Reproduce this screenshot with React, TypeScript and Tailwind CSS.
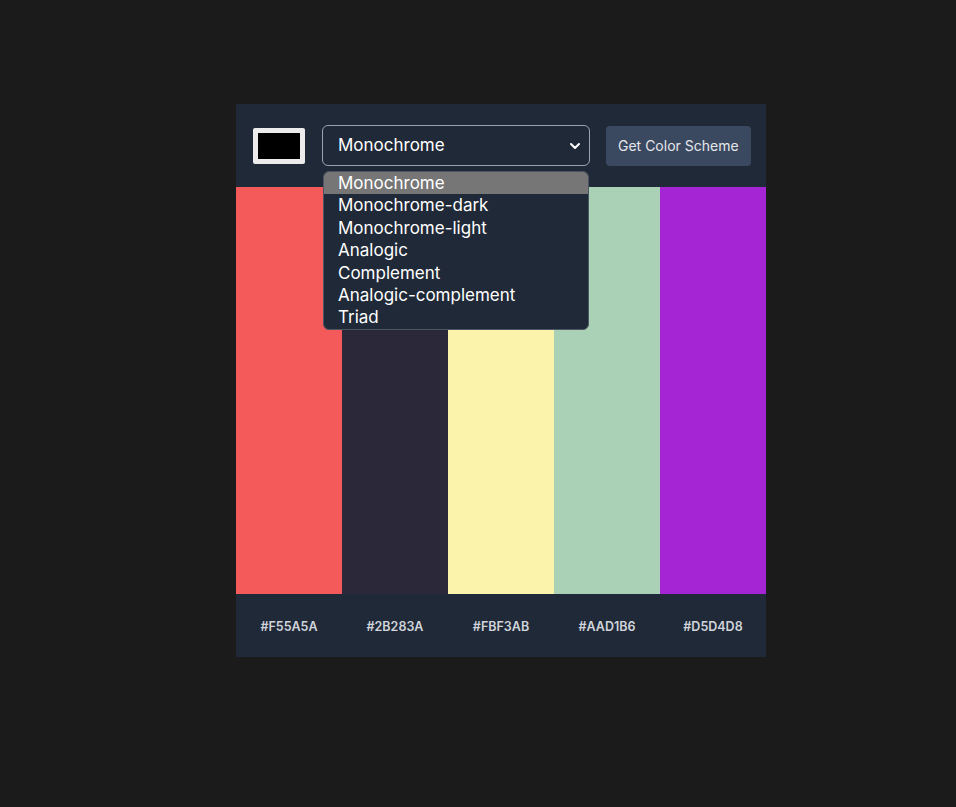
import { ChevronDown } from 'lucide-react';

const colors = [
  { hex: '#F55A5A', bg: 'bg-[#f55a5a]' },
  { hex: '#2B283A', bg: 'bg-[#2b283a]' },
  { hex: '#FBF3AB', bg: 'bg-[#fbf3ab]' },
  { hex: '#AAD1B6', bg: 'bg-[#aad1b6]' },
  { hex: '#D5D4D8', bg: 'bg-[#a524d4]' },
];

const modes = [
  'Monochrome',
  'Monochrome-dark',
  'Monochrome-light',
  'Analogic',
  'Complement',
  'Analogic-complement',
  'Triad',
];

export default function App() {
  return (
    <div className="min-h-[807px] bg-[#1b1b1b] pt-[104px] pl-[236px] font-['Inter',sans-serif]">
      <div className="w-[530px] bg-[#1f2937]">
        <div className="flex items-center h-[83px] pl-[17px] pr-[15px]">
          <div className="shrink-0 w-[52px] h-[36px] bg-[#ececec] rounded-[2px] p-[5px]">
            <div className="w-full h-full bg-black" />
          </div>
          <div className="relative shrink-0 ml-[17px]">
            <div className="flex items-center justify-between w-[268px] h-[41px] pl-[15px] pr-[6px] border border-[#9ca3af] rounded-md text-white text-[17px]">
              <span className="mt-[1px]">Monochrome</span>
              <ChevronDown className="w-4 h-4" strokeWidth={3} />
            </div>
            <div className="absolute left-[1px] top-[46px] w-[266px] bg-[#1f2937] border border-[#4b5563] rounded-md overflow-hidden z-10">
              {modes.map((m, i) => (
                <div
                  key={m}
                  className={
                    'h-[22.4px] leading-[22.4px] pl-[14px] text-[17px] text-white ' +
                    (i === 0 ? 'bg-[#767676]' : '')
                  }
                >
                  {m}
                </div>
              ))}
            </div>
          </div>
          <button className="shrink-0 whitespace-nowrap ml-[16px] h-[40px] px-[12px] rounded bg-[#3b4960] text-[#e5e7eb] text-sm">
            Get Color Scheme
          </button>
        </div>
        <div className="grid grid-cols-5 h-[407px]">
          {colors.map((c) => (
            <div key={c.hex} className={c.bg} />
          ))}
        </div>
        <div className="grid grid-cols-5 h-[63px] items-center pt-[3px]">
          {colors.map((c) => (
            <p key={c.hex} className="text-center text-[12.5px] font-semibold text-[#d1d5db]">
              {c.hex}
            </p>
          ))}
        </div>
      </div>
    </div>
  );
}
